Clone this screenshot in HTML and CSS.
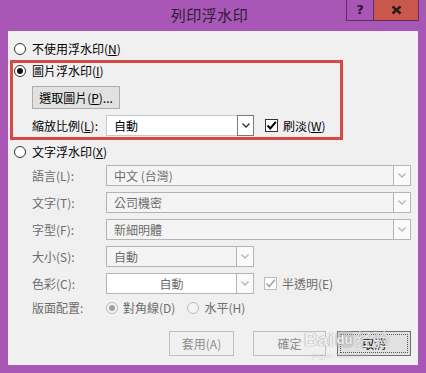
FILE: index.html
```html
<html>
  <head>
    <title>列印浮水印</title>
    <link rel="stylesheet" href="styles.css">
  </head>
  <body>
    <div class="window">
      <div class="titlebar">
        <span></span>
        <span class="title">列印浮水印</span>
        <div class="caption">
          <span class="cap help">?</span>
          <span class="cap close">
            <svg width="11" height="10" viewBox="0 0 11 10"><path d="M1.5 1.5 L9.5 8.5 M9.5 1.5 L1.5 8.5" stroke="#2a1a1a" stroke-width="2.4"/></svg>
          </span>
        </div>
      </div>

      <div class="client">
        <label class="option">
          <span class="radio"></span>
          <span>不使用浮水印(<u>N</u>)</span>
        </label>

        <div class="picture-box">
          <label class="option">
            <span class="radio checked"></span>
            <span>圖片浮水印(<u>I</u>)</span>
          </label>
          <button class="btn pick">選取圖片(<u>P</u>)...</button>
          <div class="scale-row">
            <span class="label">縮放比例(<u>L</u>):</span>
            <div class="select active">
              <span class="value">自動</span>
              <span class="arrow"><svg width="8" height="5" viewBox="0 0 8 5"><path d="M0.5 0.5 L4 4 L7.5 0.5" fill="none" stroke="#333" stroke-width="1.3"/></svg></span>
            </div>
            <span class="check checked"><svg width="11" height="11" viewBox="0 0 11 11"><path d="M1.5 5.5 L4.3 8.5 L9.8 1.8" fill="none" stroke="#000" stroke-width="2"/></svg></span>
            <span>刷淡(<u>W</u>)</span>
          </div>
        </div>

        <label class="option text-option">
          <span class="radio"></span>
          <span>文字浮水印(<u>X</u>)</span>
        </label>

        <div class="form">
          <span class="label">語言(L):</span>
          <div class="select wide">
            <span class="value">中文 (台灣)</span>
            <span class="arrow"><svg width="8" height="5" viewBox="0 0 8 5"><path d="M0.5 0.5 L4 4 L7.5 0.5" fill="none" stroke="#b5b5b5" stroke-width="1.3"/></svg></span>
          </div>

          <span class="label">文字(T):</span>
          <div class="select wide">
            <span class="value">公司機密</span>
            <span class="arrow"><svg width="8" height="5" viewBox="0 0 8 5"><path d="M0.5 0.5 L4 4 L7.5 0.5" fill="none" stroke="#b5b5b5" stroke-width="1.3"/></svg></span>
          </div>

          <span class="label">字型(F):</span>
          <div class="select wide">
            <span class="value">新細明體</span>
            <span class="arrow"><svg width="8" height="5" viewBox="0 0 8 5"><path d="M0.5 0.5 L4 4 L7.5 0.5" fill="none" stroke="#b5b5b5" stroke-width="1.3"/></svg></span>
          </div>

          <span class="label">大小(S):</span>
          <div class="select">
            <span class="value">自動</span>
            <span class="arrow"><svg width="8" height="5" viewBox="0 0 8 5"><path d="M0.5 0.5 L4 4 L7.5 0.5" fill="none" stroke="#b5b5b5" stroke-width="1.3"/></svg></span>
          </div>

          <span class="label">色彩(C):</span>
          <div class="inline">
            <div class="select colour">
              <span class="value">自動</span>
              <span class="arrow"><svg width="8" height="5" viewBox="0 0 8 5"><path d="M0.5 0.5 L4 4 L7.5 0.5" fill="none" stroke="#b5b5b5" stroke-width="1.3"/></svg></span>
            </div>
            <span class="check checked disabled"><svg width="11" height="11" viewBox="0 0 11 11"><path d="M1.5 5.5 L4.3 8.5 L9.8 1.8" fill="none" stroke="#a8a8a8" stroke-width="1.8"/></svg></span>
            <span>半透明(E)</span>
          </div>

          <span class="label">版面配置:</span>
          <div class="inline layout">
            <span class="radio checked disabled"></span>
            <span>對角線(D)</span>
            <span class="radio disabled second"></span>
            <span>水平(H)</span>
          </div>
        </div>

        <div class="buttons">
          <button class="btn apply" disabled>套用(A)</button>
          <button class="btn ok" disabled>確定</button>
          <button class="btn cancel"><span class="focus">取消</span></button>
        </div>
      </div>

      <div class="watermark">
        <span class="bai">Bai</span><span class="du">du</span><span class="jy">经验</span>
        <span class="url">jingyan.baidu.com</span>
      </div>
    </div>
  </body>
</html>
```

FILE: styles.css
```css
* {
  box-sizing: border-box;
}
body {
  margin: 0;
  font-family: "Noto Sans CJK TC", "Liberation Sans", sans-serif;
  font-size: 12px;
  line-height: 16px;
  color: #000;
}
u {
  text-decoration-thickness: 1px;
  text-underline-offset: 1px;
}
.window {
  position: relative;
  width: 426px;
  height: 373px;
  background: #a957b6;
  display: flex;
  flex-direction: column;
}

/* title bar */
.titlebar {
  height: 31px;
  display: grid;
  grid-template-columns: 1fr auto 1fr;
  padding-right: 7px;
}
.title {
  font-size: 15px;
  line-height: 30px;
  color: #2e1a33;
  letter-spacing: 0.5px;
}
.caption {
  display: flex;
  justify-content: flex-end;
  align-items: flex-start;
}
.cap {
  height: 21px;
  display: flex;
  align-items: center;
  justify-content: center;
  border: 1px solid #5e2f66;
  border-top: none;
}
.help {
  width: 27px;
  border-right: none;
  font-family: "DejaVu Sans", sans-serif;
  font-weight: bold;
  font-size: 13px;
  color: #2a1a2e;
}
.close {
  width: 46px;
  background: #c9574c;
}

/* client area */
.client {
  flex: 1;
  margin: 0 8px 8px;
  background: #f0f0f0;
  display: flex;
  flex-direction: column;
  padding-top: 8px;
}
.option {
  display: flex;
  align-items: center;
  gap: 6px;
  height: 20px;
  padding-left: 6px;
}
.radio {
  width: 12px;
  height: 12px;
  border: 1px solid #333;
  border-radius: 50%;
  background: #fff;
  display: flex;
  align-items: center;
  justify-content: center;
  flex: none;
}
.radio.checked::after {
  content: "";
  width: 6px;
  height: 6px;
  border-radius: 50%;
  background: #111;
}
.radio.disabled {
  border-color: #bcbcbc;
  background: #f4f4f4;
}
.radio.disabled.checked::after {
  background: #a0a0a0;
}

.picture-box {
  margin: 1px 0 0 2px;
  width: 333px;
  border: 3px solid #d44a45;
  padding-bottom: 1px;
  display: flex;
  flex-direction: column;
  align-items: flex-start;
}
.picture-box .option {
  height: 16px;
  padding-left: 1px;
}
.btn {
  font: inherit;
  line-height: 16px;
  border: 1px solid #adadad;
  background: #e1e1e1;
  color: #000;
  padding: 0;
}
.pick {
  margin: 7px 0 0 19px;
  width: 88px;
  height: 23px;
}
.scale-row {
  margin: 6px 0 0 19px;
  height: 21px;
  display: flex;
  align-items: center;
}
.label {
  width: 74px;
  display: flex;
  align-items: center;
}
.select {
  width: 148px;
  height: 21px;
  display: flex;
  border: 1px solid #b4b4b4;
  background: #f4f4f4;
  color: #6d6d6d;
}
.select .value {
  flex: 1;
  padding-left: 7px;
  line-height: 19px;
}
.select .arrow {
  width: 17px;
  border-left: 1px solid #b4b4b4;
  background: #fafafa;
  display: flex;
  align-items: center;
  justify-content: center;
}
.select.active {
  background: #fff;
  color: #000;
  border-color: #c8c8c8;
}
.select.active .arrow {
  border: 1px solid #7a7a7a;
  margin: -1px -1px -1px 0;
  width: 17px;
  background: #fff;
}
.select.wide {
  width: 305px;
}
.select.colour .value {
  background: #fff;
  text-align: center;
  padding-left: 0;
}
.check {
  width: 13px;
  height: 13px;
  border: 1px solid #333;
  background: #fff;
  display: flex;
  align-items: center;
  justify-content: center;
  margin: 0 5px 0 11px;
  flex: none;
}
.check.disabled {
  border-color: #bcbcbc;
  margin-left: 10px;
}

.text-option {
  margin-top: 3px;
  height: 18px;
}
.form {
  margin-top: 4px;
  padding-left: 24px;
  display: grid;
  grid-template-columns: 74px auto;
  grid-template-rows: repeat(5, 21px) 16px;
  row-gap: 6px;
  color: #6d6d6d;
  justify-items: start;
}
.inline {
  display: flex;
  align-items: center;
}
.layout .radio {
  margin-right: 5px;
}
.layout .second {
  margin-left: 12px;
}

.buttons {
  margin-top: 15px;
  display: flex;
  padding-left: 161px;
}
.buttons .btn {
  height: 25px;
}
.apply {
  width: 65px;
}
.ok {
  width: 73px;
  margin-left: 19px;
}
.apply, .ok {
  background: #f0f0f0;
  border-color: #bfbfbf;
  color: #8d8d8d;
}
.cancel {
  width: 74px;
  margin-left: 11px;
  border-color: #6e6e6e;
  padding: 2px;
}
.cancel .focus {
  display: block;
  height: 100%;
  border: 1px dotted #555;
  line-height: 17px;
}

/* site watermark over the screenshot */
.watermark {
  position: absolute;
  left: 304px;
  top: 327px;
  width: 100px;
  height: 34px;
  color: rgba(255, 255, 255, 0.85);
  text-shadow: 0 0 1px #999, 0 0 1px #999;
  font-family: "Liberation Sans", sans-serif;
  font-weight: bold;
  font-size: 19px;
  line-height: 24px;
}
.watermark .du {
  display: inline-block;
  font-size: 13px;
  line-height: 17px;
  padding: 0 2px;
  margin: 0 1px;
  border-radius: 5px;
  background: rgba(180, 180, 180, 0.45);
  vertical-align: 2px;
}
.watermark .jy {
  font-family: "Noto Sans CJK SC", sans-serif;
  font-weight: normal;
  font-size: 17px;
}
.watermark .url {
  display: block;
  font-size: 7px;
  line-height: 8px;
  font-weight: normal;
  text-shadow: none;
  color: rgba(200, 200, 200, 0.6);
  padding-left: 8px;
}
```
